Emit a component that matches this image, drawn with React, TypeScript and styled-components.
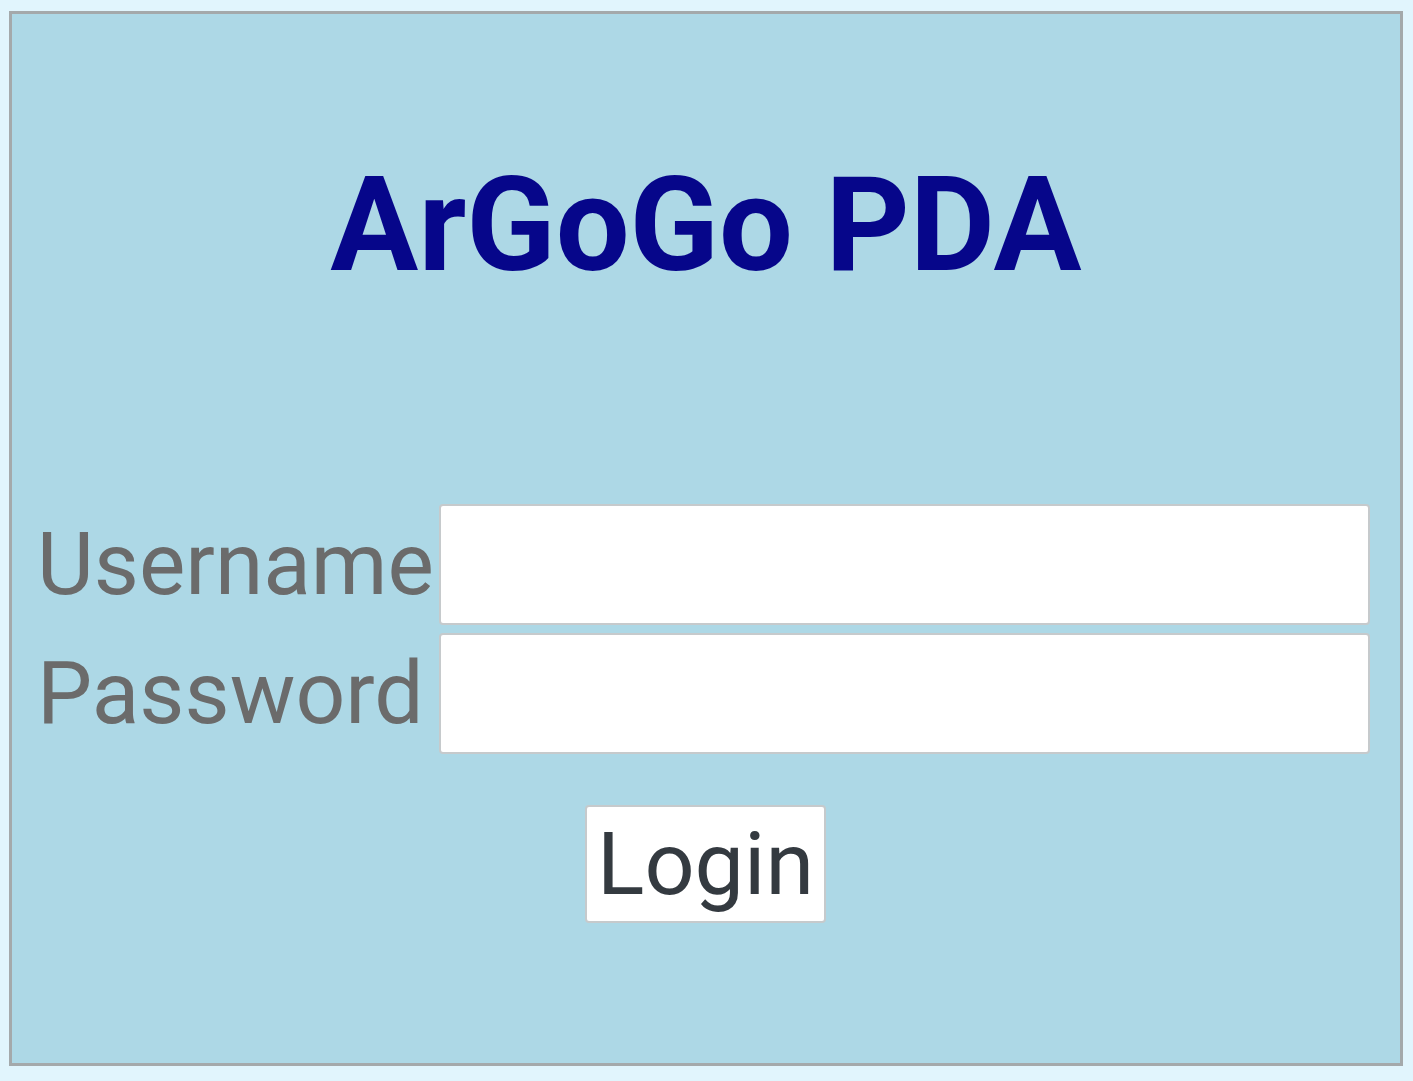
import React from "react";
import styled, { createGlobalStyle } from "styled-components";

const Global = createGlobalStyle`
  html, body {
    margin: 0;
    padding: 0;
    background: #e1f5fd;
    font-family: Roboto, "Liberation Sans", sans-serif;
  }
  * { box-sizing: border-box; }
`;

const Page = styled.div`
  padding: 11px 10px 15px 9px;
  min-height: 1081px;
`;

const Panel = styled.div`
  width: 1394px;
  height: 1055px;
  background: #add8e6;
  border: 3px solid #a4a9ab;
  padding-top: 133px;
  display: flex;
  flex-direction: column;
`;

const Title = styled.h1`
  margin: 0;
  font-size: 131px;
  line-height: 1.2;
  font-weight: 700;
  color: #06068a;
  text-align: center;
  letter-spacing: 0;
`;

const Form = styled.form`
  margin-top: 200px;
  padding: 0 30px 0 25px;
  display: flex;
  flex-direction: column;
  align-items: stretch;
`;

const Fields = styled.div`
  display: grid;
  grid-template-columns: 402px 1fr;
  row-gap: 8px;
  align-items: center;
`;

const Label = styled.label`
  font-size: 87.5px;
  line-height: 1;
  color: #6b6b6b;
  font-weight: 400;
  white-space: nowrap;
`;

const Input = styled.input`
  height: 121px;
  width: 100%;
  border: 2px solid #c6cacc;
  border-radius: 4px;
  background: #fff;
  font-size: 60px;
  padding: 0 16px;
  outline: none;
`;

const ButtonRow = styled.div`
  display: flex;
  justify-content: center;
  margin-top: 51px;
  padding-left: 4px;
`;

const Button = styled.button`
  height: 118px;
  width: 241px;
  padding: 0 10px;
  background: #fff;
  border: 2px solid #c6cacc;
  border-radius: 4px;
  font-family: Roboto, "Liberation Sans", sans-serif;
  font-size: 88px;
  line-height: 1;
  color: #343a40;
  cursor: pointer;
`;

export default function App() {
  return (
    <>
      <Global />
      <Page>
        <Panel>
          <Title>ArGoGo PDA</Title>
          <Form onSubmit={(e) => e.preventDefault()}>
            <Fields>
              <Label htmlFor="username">Username</Label>
              <Input id="username" type="text" />
              <Label htmlFor="password">Password</Label>
              <Input id="password" type="password" />
            </Fields>
            <ButtonRow>
              <Button type="submit">Login</Button>
            </ButtonRow>
          </Form>
        </Panel>
      </Page>
    </>
  );
}
